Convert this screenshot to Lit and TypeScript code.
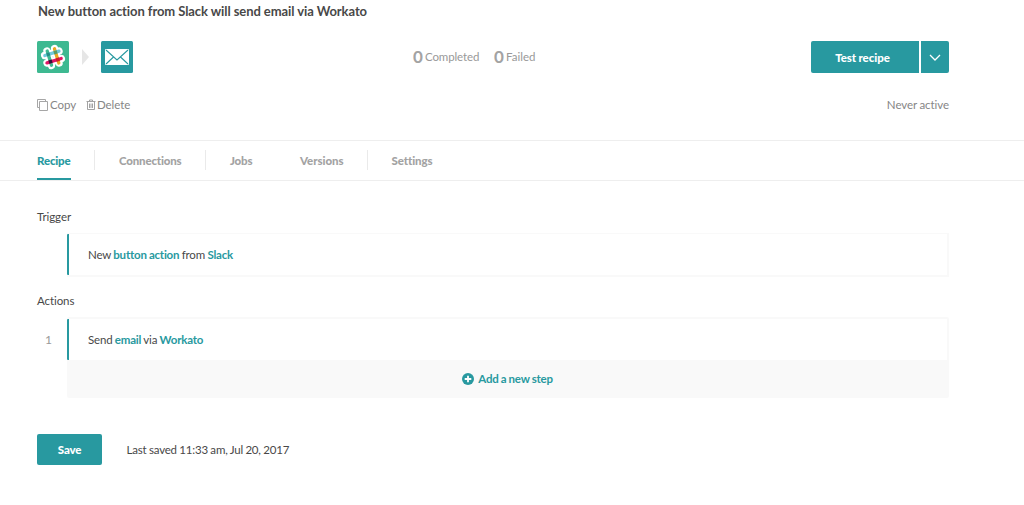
import { LitElement, html, css, svg } from "lit";
import { customElement, state } from "lit/decorators.js";
import { classMap } from "lit/directives/class-map.js";

const slackLogo = svg`
  <g transform="rotate(-17 16 16)">
    <g fill="none" stroke="#fff" stroke-width="7.4" stroke-linecap="round">
      <path d="M12 8.5V23.5M20 8.5V23.5M8.5 12H23.5M8.5 20H23.5"/>
    </g>
    <g fill="none" stroke-width="3.3" stroke-linecap="round">
      <path stroke="#3eb991" d="M12.2 8.6V23.4"/>
      <path stroke="#e9a820" d="M19.8 8.6V23.4"/>
      <path stroke="#70cadb" d="M8.6 12.2H23.4"/>
      <path stroke="#e01765" d="M8.6 19.8H23.4"/>
    </g>
    <path fill="#258f83" d="M10.5 10.5h3.4v3.4h-3.4z"/>
    <path fill="#5a9c62" d="M18.1 10.5h3.4v3.4h-3.4z"/>
    <path fill="#361238" d="M10.5 18.1h3.4v3.4h-3.4z"/>
    <path fill="#cc2027" d="M18.1 18.1h3.4v3.4h-3.4z"/>
  </g>`;

@customElement("app-root")
export class AppRoot extends LitElement {
  @state() private active = "Recipe";

  private tabs = [
    { name: "Recipe", kind: "t-recipe", line: true },
    { name: "Connections", kind: "t-conn", line: true },
    { name: "Jobs", kind: "t-jobs", line: false },
    { name: "Versions", kind: "t-vers", line: true },
    { name: "Settings", kind: "t-set", line: false },
  ];

  static styles = css`
    :host { display: block; height: 505px; overflow: hidden; background: #fff; color: #484848;
      font: 11.5px/16px Lato, "Liberation Sans", sans-serif; letter-spacing: -.18px; word-spacing: -.35px; }
    * { box-sizing: border-box; }
    svg { display: block; flex: none; }
    button { border: 0; padding: 0; background: none; font: inherit; letter-spacing: inherit; word-spacing: inherit; color: inherit; cursor: pointer; white-space: nowrap; }
    .head { height: 140px; padding: 3px 75px 0 37px; }
    .title { margin: 0 0 0 1px; font-size: 13px; line-height: 17px; font-weight: 700; white-space: nowrap; letter-spacing: -.08px; word-spacing: 0; }
    .main { display: flex; align-items: center; height: 32px; margin-top: 21px; }
    .arrow { margin: 0 12px 0 13px; }
    .stats { display: flex; align-items: center; margin-left: 280px; color: #999; white-space: nowrap; letter-spacing: -.12px; }
    .stat { display: flex; align-items: center; width: 81px; gap: 2px; }
    .failed { letter-spacing: .02px; }
    .num { font-size: 17px; font-weight: 700; color: #a3a3a3; width: 10px; }
    .run { display: flex; gap: 2px; margin-left: auto; color: #fff; font-weight: 900; letter-spacing: -.05px; }
    .run button { height: 32px; background: #2899a0; }
    .test { width: 108px; border-radius: 2px 0 0 2px; padding: 2px 5px 0 0; }
    .drop { width: 28px; border-radius: 0 2px 2px 0; display: flex; align-items: center; justify-content: center; }
    .sub { display: flex; align-items: center; height: 16px; margin-top: 24px; color: #868686; letter-spacing: -.06px; }
    .tool { display: flex; align-items: center; }
    .copy { width: 49px; gap: 2px; }
    .never { margin-left: auto; }
    .tabs { display: flex; height: 41px; padding-left: 37px; border-top: 1px solid #eee; border-bottom: 1px solid #eee; }
    .tab { height: 39px; padding-top: 1px; color: #a3a3a3; font-weight: 900; text-align: left; }
    .on { color: #2899a0; border-bottom: 2px solid #2899a0; padding-top: 3px; }
    .t-recipe { width: 34px; } .t-conn { width: 63px; } .t-jobs { width: 22px; } .t-vers { width: 44px; letter-spacing: -.05px; }
    .t-set { width: 43px; letter-spacing: -.1px; margin-left: -.5px; }
    .sep { width: 1px; height: 20px; margin: 9px 24px 0 23px; background: transparent; }
    .line { background: #eaeaea; }
    .body { padding: 28px 75px 0 37px; }
    .label { height: 16px; margin-bottom: 8px; letter-spacing: -.08px; }
    .box { margin-left: 30px; height: 44px; border: 2px solid #f9f9f9; border-left: 0; }
    .step { display: flex; align-items: center; height: 41px; padding-left: 19px; border-left: 2px solid #2899a0; border-radius: 1px 0 0 1px; background: #fff; white-space: pre; }
    .trigger { margin-top: -1px; }
    .actions { margin-top: 16px; }
    .row { display: flex; }
    .index { width: 30px; padding: 15px 0 0 8px; color: #999; font-size: 12px; }
    .stack { flex: 1; height: 81px; padding: 2px 2px 0 0; background: #f9f9f9; border-radius: 2px; }
    .term { color: #2899a0; font-weight: 700; letter-spacing: -.21px; }
    .add { display: flex; align-items: center; justify-content: center; width: 100%; height: 38px; padding-left: 1px; gap: 4px; color: #2899a0; font-weight: 700; letter-spacing: -.22px; }
    .foot { display: flex; align-items: center; margin-top: 36px; gap: 24.5px; }
    .save { width: 65px; height: 31px; border-radius: 2px; background: #2899a0; color: #fff; font-weight: 900; }
  `;

  render() {
    return html`
      <header class="head">
        <h1 class="title">New button action from Slack will send email via Workato</h1>
        <div class="main">
          <svg width="32" height="32" viewBox="0 0 32 32"><rect width="32" height="32" rx="1.5" fill="#3eb991"/>${slackLogo}</svg>
          <svg class="arrow" width="7" height="16" viewBox="0 0 7 16"><path fill="#e6e6e6" d="M0 0 7 8 0 16z"/></svg>
          <svg width="32" height="32" viewBox="0 0 32 32">
            <rect width="32" height="32" rx="1.5" fill="#2899a0"/><rect x="4" y="8" width="24" height="16" rx="1" fill="#fff"/>
            <path d="M5 9 16 19 27 9M5 23l7.5-7M27 23l-7.5-7" fill="none" stroke="#2899a0" stroke-width="1.1"/>
          </svg>
          <div class="stats">
            <div class="stat"><span class="num">0</span><span>Completed</span></div>
            <div class="stat failed"><span class="num">0</span><span>Failed</span></div>
          </div>
          <div class="run">
            <button class="test">Test recipe</button>
            <button class="drop" aria-label="More"><svg width="12" height="7" viewBox="0 0 12 7"><path d="M1 1l5 5 5-5" fill="none" stroke="#fff" stroke-width="1.3"/></svg></button>
          </div>
        </div>
        <div class="sub">
          <button class="tool copy"><svg width="11" height="12" viewBox="0 0 11 12"><path d="M2.5 8.5h-2v-8h8v2M2.5 2.5h8v9h-8z" fill="none" stroke="#a6a6a6"/></svg>Copy</button>
          <button class="tool"><svg width="11" height="12" viewBox="0 0 11 12"><path d="M.5 2.5h9M3.5 2V1h3v1M1.5 3v7.5h7V3M3.5 4.5v4.5M5 4.5v4.5M6.5 4.5v4.5" fill="none" stroke="#999" stroke-width=".9"/></svg>Delete</button>
          <span class="never">Never active</span>
        </div>
      </header>
      <nav class="tabs">
        ${this.tabs.map((t, i) => html`
          <button class=${classMap({ tab: true, [t.kind]: true, on: t.name === this.active })} @click=${() => (this.active = t.name)}>${t.name}</button>
          ${i < this.tabs.length - 1 ? html`<span class=${classMap({ sep: true, line: t.line })}></span>` : ""}`)}
      </nav>
      <main class="body">
        <div class="label">Trigger</div>
        <div class="box"><div class="step trigger">New <span class="term">button action</span> from <span class="term">Slack</span></div></div>
        <div class="label actions">Actions</div>
        <div class="row">
          <div class="index">1</div>
          <div class="stack">
            <div class="step">Send <span class="term">email</span> via <span class="term">Workato</span></div>
            <button class="add"><svg width="12" height="12" viewBox="0 0 12 12"><circle cx="6" cy="6" r="6" fill="#2899a0"/><path d="M6 2.7v6.6M2.7 6h6.6" stroke="#fff" stroke-width="1.8"/></svg>Add a new step</button>
          </div>
        </div>
        <div class="foot"><button class="save">Save</button><span>Last saved 11:33 am, Jul 20, 2017</span></div>
      </main>`;
  }
}
